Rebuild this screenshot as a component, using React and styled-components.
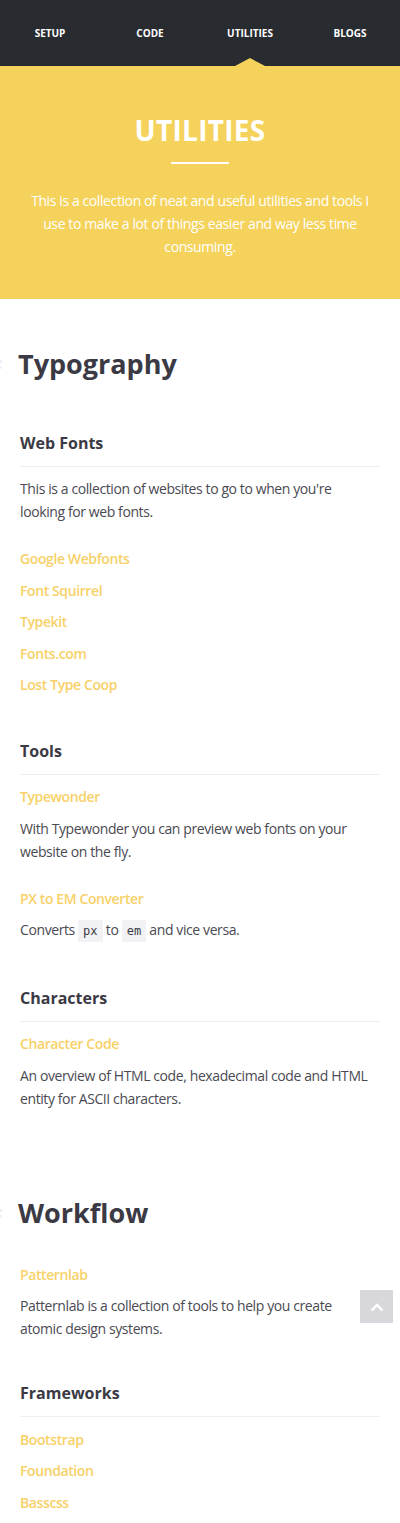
import React from 'react';
import styled, { createGlobalStyle } from 'styled-components';

const GlobalStyle = createGlobalStyle`
  html, body {
    margin: 0;
    padding: 0;
    background: #ffffff;
  }
  body {
    font-family: "Open Sans", "Liberation Sans", sans-serif;
    color: #4a4a50;
    overflow-x: hidden;
  }
  * {
    box-sizing: border-box;
  }
`;

const Page = styled.div`
  position: relative;
  width: 400px;
  min-height: 1523px;
  overflow: hidden;
`;

const Nav = styled.nav`
  display: grid;
  grid-template-columns: repeat(4, 1fr);
  height: 66px;
  background: #282b30;
`;

const NavItem = styled.a`
  position: relative;
  display: flex;
  align-items: center;
  justify-content: center;
  padding-bottom: 1px;
  color: #ffffff;
  font-size: 10px;
  font-weight: 700;
  text-transform: uppercase;
  text-decoration: none;

  &::after {
    content: "";
    display: ${props => props.$active ? 'block' : 'none'};
    position: absolute;
    bottom: 0;
    left: 50%;
    transform: translateX(-50%);
    border-left: 15px solid transparent;
    border-right: 15px solid transparent;
    border-bottom: 8px solid #f5d25b;
  }
`;

const Hero = styled.header`
  background: #f5d25b;
  color: #ffffff;
  text-align: center;
  padding: 47px 24px 41px;
`;

const HeroTitle = styled.h1`
  margin: 0;
  font-size: 28px;
  line-height: 34px;
  font-weight: 700;
  letter-spacing: 0.3px;
  text-transform: uppercase;

  &::after {
    content: "";
    display: block;
    width: 58px;
    height: 2px;
    margin: 15px auto 0;
    background: #ffffff;
  }
`;

const HeroText = styled.p`
  margin: 25px 0 0;
  font-size: 14px;
  line-height: 23px;
  letter-spacing: -0.4px;
`;

const Content = styled.main`
  padding: 0 20px 40px;
`;

const Section = styled.section`
  padding-top: ${props => props.$first ? '47px' : '85px'};
`;

const SectionTitle = styled.h2`
  position: relative;
  margin: 0 0 0 -2px;
  font-size: 27px;
  line-height: 36px;
  font-weight: 700;
  color: #3b3a44;

  &::before {
    content: "#";
    position: absolute;
    left: -33px;
    top: 0;
    color: #ececf2;
    font-weight: 700;
  }
`;

const Group = styled.div`
  margin-top: ${props => props.$top || '38px'};
`;

const GroupTitle = styled.h3`
  margin: 0 0 10px;
  padding-bottom: 11px;
  border-bottom: 1px solid #eeeef0;
  font-size: 16px;
  line-height: 24px;
  font-weight: 700;
  color: #3b3a44;
`;

const Text = styled.p`
  max-width: 354px;
  margin: ${props => props.$margin || '0'};
  font-size: 14px;
  line-height: 23px;
  letter-spacing: -0.4px;
  color: #4a4a52;
`;

const LinkList = styled.ul`
  list-style: none;
  margin: ${props => props.$tight ? '-3px 0 0' : '20px 0 0'};
  padding: 0;
`;

const LinkItem = styled.li`
  line-height: 31.5px;
`;

const Link = styled.a`
  display: ${props => props.$block ? 'block' : 'inline'};
  color: #f7d168;
  font-size: 14px;
  font-weight: 600;
  letter-spacing: -0.4px;
  line-height: ${props => props.$block ? '23px' : 'inherit'};
  text-decoration: none;
`;

const Tool = styled.div`
  margin-top: ${props => props.$first ? '0' : '24px'};
`;

const Code = styled.code`
  display: inline-block;
  padding: 0 5px;
  background: #f2f2f5;
  color: #3b3a44;
  font-family: "DejaVu Sans Mono", "Liberation Mono", monospace;
  font-size: 12px;
  line-height: 22px;
  letter-spacing: 0;
`;

const ToTop = styled.button`
  position: absolute;
  top: 1290px;
  right: 7px;
  width: 33px;
  height: 33px;
  display: flex;
  align-items: center;
  justify-content: center;
  padding: 0;
  border: none;
  background: #d8d8dc;
  cursor: pointer;
`;

const navItems = ['Setup', 'Code', 'Utilities', 'Blogs'];
const webFonts = ['Google Webfonts', 'Font Squirrel', 'Typekit', 'Fonts.com', 'Lost Type Coop'];
const frameworks = ['Bootstrap', 'Foundation', 'Basscss'];

const App = () => {
  return (
    <Page>
      <GlobalStyle />
      <Nav>
        {navItems.map(item => (
          <NavItem key={item} href="#" $active={item === 'Utilities'}>{item}</NavItem>
        ))}
      </Nav>

      <Hero>
        <HeroTitle>Utilities</HeroTitle>
        <HeroText>
          This is a collection of neat and useful utilities and tools I use to make a lot of things easier and way less time consuming.
        </HeroText>
      </Hero>

      <Content>
        <Section $first>
          <SectionTitle>Typography</SectionTitle>

          <Group $top="49px">
            <GroupTitle>Web Fonts</GroupTitle>
            <Text>This is a collection of websites to go to when you're looking for web fonts.</Text>
            <LinkList>
              {webFonts.map(name => (
                <LinkItem key={name}><Link href="#">{name}</Link></LinkItem>
              ))}
            </LinkList>
          </Group>

          <Group>
            <GroupTitle>Tools</GroupTitle>
            <Tool $first>
              <Link $block href="#">Typewonder</Link>
              <Text $margin="9px 0 0">With Typewonder you can preview web fonts on your website on the fly.</Text>
            </Tool>
            <Tool>
              <Link $block href="#">PX to EM Converter</Link>
              <Text $margin="8px 0 0">Converts <Code>px</Code> to <Code>em</Code> and vice versa.</Text>
            </Tool>
          </Group>

          <Group $top="44px">
            <GroupTitle>Characters</GroupTitle>
            <Tool $first>
              <Link $block href="#">Character Code</Link>
              <Text $margin="9px 0 0">An overview of HTML code, hexadecimal code and HTML entity for ASCII characters.</Text>
            </Tool>
          </Group>
        </Section>

        <Section>
          <SectionTitle>Workflow</SectionTitle>
          <Group $top="32px">
            <Tool $first>
              <Link $block href="#">Patternlab</Link>
              <Text $margin="8px 0 0">Patternlab is a collection of tools to help you create atomic design systems.</Text>
            </Tool>
          </Group>

          <Group $top="41px">
            <GroupTitle>Frameworks</GroupTitle>
            <LinkList $tight>
              {frameworks.map(name => (
                <LinkItem key={name}><Link href="#">{name}</Link></LinkItem>
              ))}
            </LinkList>
          </Group>
        </Section>
      </Content>

      <ToTop aria-label="Back to top">
        <svg width="14" height="14" viewBox="0 0 14 14">
          <path d="M2.5 9.5 L7 5 L11.5 9.5" fill="none" stroke="#ffffff" strokeWidth="2.4" strokeLinecap="square" />
        </svg>
      </ToTop>
    </Page>
  );
};

export default App;
